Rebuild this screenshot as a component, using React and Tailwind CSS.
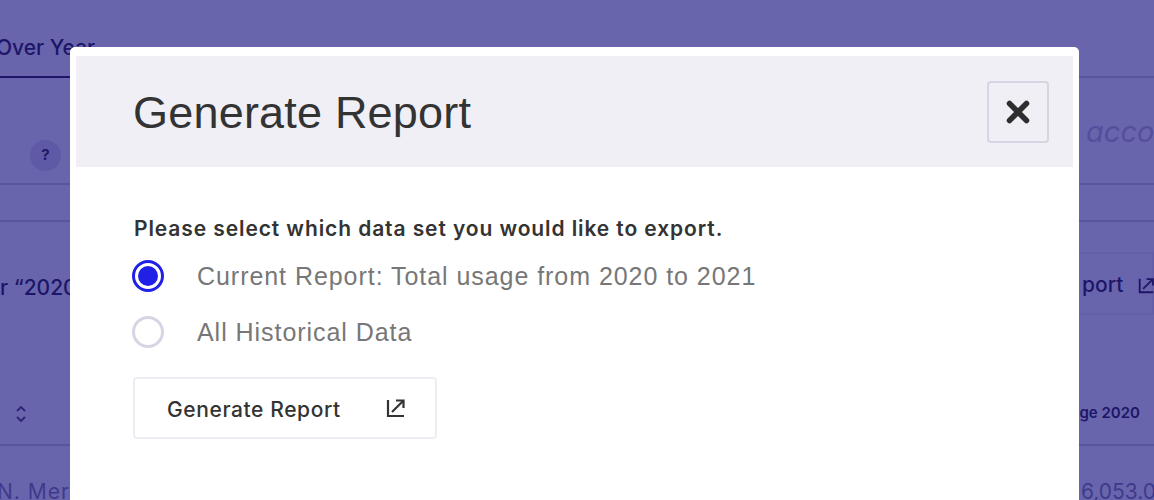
import React from 'react'

function ExportIcon({ className }) {
  return (
    <svg viewBox="0 0 20 20" fill="none" stroke="currentColor" strokeWidth="2.200" className={className}>
      <path d="M2 2v16h16" />
      <path d="M6 14 17 3" />
      <path d="M10 2.500h7.500V10" />
    </svg>
  )
}

function Background() {
  return (
    <div className="h-[500px] overflow-hidden bg-[#6965ad] text-[#1d1668] flex flex-col">
      {/* Tabs */}
      <div className="h-[78px] shrink-0 border-b-2 border-[#5a559f] flex items-end">
        <div className="ml-[-4px] w-[100px] pb-[16px] border-b-2 border-[#1d1668] -mb-[2px] text-[21px] leading-[24px] font-medium whitespace-nowrap">
          Over Year
        </div>
      </div>
      {/* Question row */}
      <div className="h-[107px] shrink-0 border-b-2 border-[#5a559f] flex items-center justify-between">
        <div className="ml-[30px] mt-[49px] w-[31px] h-[31px] rounded-full bg-[#5f5aa6] flex items-center justify-center text-[15px] font-bold">?</div>
        <div className="mt-[2px] text-[29px] italic text-[#544f9c] w-[68px] overflow-hidden whitespace-nowrap">acco</div>
      </div>
      <div className="h-[37px] shrink-0 border-b-2 border-[#5a559f]"></div>
      {/* Report row */}
      <div className="h-[93px] shrink-0 flex items-end justify-between">
        <div className="mb-[12px] text-[21px] font-medium whitespace-nowrap">r “2020</div>
        <div className="w-[120px] h-[63px] border-2 border-[#645fa9] flex items-center gap-[15px] pl-[46px] pt-[3px] text-[21px] font-medium">
          <span>port</span>
          <ExportIcon className="w-[17px] h-[17px] shrink-0" />
        </div>
      </div>
      {/* Table head */}
      <div className="h-[131px] shrink-0 border-b-2 border-[#5a559f] flex items-end justify-between pb-[20px]">
        <svg viewBox="0 0 12 20" fill="none" stroke="currentColor" strokeWidth="1.800" className="ml-[15px] w-[12px] h-[20px] opacity-80">
          <path d="M2 7l4-4 4 4" />
          <path d="M2 13l4 4 4-4" />
        </svg>
        <span className="mr-[14px] text-[15px] font-semibold">ge 2020</span>
      </div>
      {/* Table row */}
      <div className="flex justify-between pt-[30px] text-[21px] text-[#3f3a8c] whitespace-nowrap">
        <span className="ml-[-3px] tracking-[1px]">N. Mer</span>
        <span className="mr-[-2px]">6,053.0</span>
      </div>
    </div>
  )
}

export default function App() {
  return (
    <div className="relative w-[1154px] h-[500px] overflow-hidden font-['Inter',sans-serif]">
      <Background />
      <div className="absolute left-[70px] top-[47px] w-[1009px] h-[480px] bg-white rounded-[5px] pt-[9px] px-[6px]">
        <div className="h-[111px] bg-[#f0eff5] flex items-center justify-between pl-[57px] pr-[24px]">
          <h2 className="pt-[2px] font-['Liberation_Sans',sans-serif] text-[45px] leading-[54px] tracking-[0.2px] text-[#333333]">Generate Report</h2>
          <button className="w-[62px] h-[62px] rounded-[4px] border-2 border-[#d6d5e3] flex items-center justify-center text-[#2e2e2e]">
            <svg viewBox="0 0 24 24" fill="none" stroke="currentColor" strokeWidth="5.500" strokeLinecap="round" className="w-[24px] h-[24px]">
              <path d="M3.500 3.500l17 17M20.500 3.500l-17 17" />
            </svg>
          </button>
        </div>
        <div className="pl-[56px] pt-[49px]">
          <p className="ml-[2px] text-[21px] leading-[26px] font-semibold text-[#333333] tracking-[0.9px]">Please select which data set you would like to export.</p>
          <div className="mt-[18px] flex items-center gap-[33px] h-[32px]">
            <span className="w-[32px] h-[32px] rounded-full border-[3px] border-[#2020e6] p-[3px]">
              <span className="block w-full h-full rounded-full bg-[#2020e6]"></span>
            </span>
            <span className="pt-[2px] font-['Liberation_Sans',sans-serif] text-[25px] text-[#777777] tracking-[0.95px]">Current Report: Total usage from 2020 to 2021</span>
          </div>
          <div className="mt-[24px] flex items-center gap-[33px] h-[32px]">
            <span className="w-[32px] h-[32px] rounded-full border-[3px] border-[#d6d5e3]"></span>
            <span className="pt-[2px] font-['Liberation_Sans',sans-serif] text-[25px] text-[#777777] tracking-[0.95px]">All Historical Data</span>
          </div>
          <button className="ml-[1px] mt-[29px] w-[304px] h-[62px] rounded-[4px] border-2 border-[#eeedf4] flex items-center justify-between pl-[32px] pr-[29px] text-[#333333]">
            <span className="pt-[3px] text-[21px] font-medium tracking-[0.6px]">Generate Report</span>
            <ExportIcon className="w-[20px] h-[20px]" />
          </button>
        </div>
      </div>
    </div>
  )
}
